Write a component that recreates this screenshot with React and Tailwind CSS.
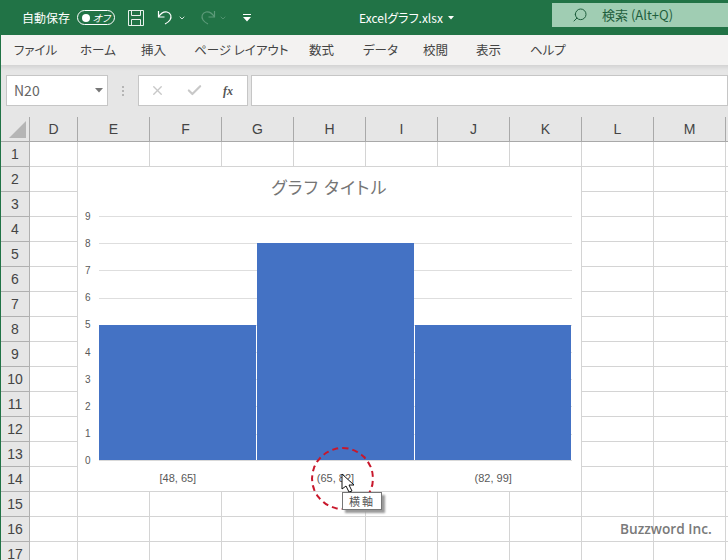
import React from "react";
import { ChevronDown, Check, X, Search } from "lucide-react";

const JP = "font-['Meiryo','Noto_Sans_CJK_JP',sans-serif] [font-feature-settings:'palt']";

const tabs = [
  { label: "ファイル", width: "w-[38px]" },
  { label: "ホーム", width: "w-[33px]" },
  { label: "挿入", width: "w-[25px]" },
  { label: "ページ レイアウト", width: "w-[87px]" },
  { label: "数式", width: "w-[26px]" },
  { label: "データ", width: "w-[32px]" },
  { label: "校閲", width: "w-[25px]" },
  { label: "表示", width: "w-[26px]" },
  { label: "ヘルプ", width: "w-[32px]" },
];
const columns = ["D", "E", "F", "G", "H", "I", "J", "K", "L", "M"];
const rows = Array.from({ length: 17 }, (_, i) => i + 1);

// ===== Title bar =====
function TitleBar() {
  return (
    <div className="h-[35px] bg-[#217346] flex items-center text-white shrink-0">
      <span className="ml-[22px] text-[12px] w-[48px] whitespace-nowrap">自動保存</span>
      <div className="ml-[7px] w-[38px] h-[15px] border border-white rounded-full flex items-center justify-between pl-[4px] pr-[4px]">
        <span className="w-[8px] h-[8px] bg-white rounded-full" />
        <span className="text-[10px] leading-none italic">オフ</span>
      </div>
      <svg className="ml-[13px]" width="16" height="16" viewBox="0 0 16 16" fill="none" stroke="#e8f1ec" strokeWidth="1">
        <path d="M.5.5h15v15H.5z" />
        <path d="M3.500.5v5h9v-5M3.500 15.500v-6h9v6" />
      </svg>
      <svg className="ml-[13px]" width="17" height="17" viewBox="0 0 17 17" fill="none" stroke="#fff" strokeWidth="1.2">
        <path d="M1.500 2v6h6" />
        <path d="M1.500 8C4 4 7 2.500 10 3c4 .8 5 5 3 8-1 1.500-3 3-5 4" />
      </svg>
      <ChevronDown className="ml-[4px]" size={8} strokeWidth={2.4} />
      <svg className="ml-[13px] text-[#5c9a79]" width="17" height="17" viewBox="0 0 17 17" fill="none" stroke="currentColor" strokeWidth="1.2">
        <path d="M15.500 2v6h-6" />
        <path d="M15.500 8C13 4 10 2.500 7 3c-4 .8-5 5-3 8 1 1.500 3 3 5 4" />
      </svg>
      <ChevronDown className="ml-[3px] text-[#5c9a79]" size={8} strokeWidth={2.4} />
      <svg className="ml-[16px]" width="8" height="8" viewBox="0 0 8 8" fill="#fff">
        <path d="M0 0h8v1H0zM0 3h8L4 7.500z" />
      </svg>
      <span className="ml-[108px] text-[12px] whitespace-nowrap w-[82px]">Excelグラフ.xlsx</span>
      <svg className="ml-[7px]" width="6" height="4" viewBox="0 0 6 4" fill="#fff">
        <path d="M0 0h6L3 3.500z" />
      </svg>
      <div className="ml-auto mb-[5px] w-[176px] h-[24px] bg-[#a0cdb3] flex items-center text-[#1f5f3e]">
        <Search className="ml-[20px] -scale-x-100" size={16} strokeWidth={1.5} />
        <span className="ml-[14px] text-[13px] whitespace-nowrap">検索 (Alt+Q)</span>
      </div>
    </div>
  );
}

// ===== Ribbon tabs =====
function RibbonTabs() {
  return (
    <div className="h-[30px] bg-[#f3f2f1] flex items-center pl-[13px] gap-[28px] text-[12.500px] text-[#444444] shrink-0">
      {tabs.map((tab) => (
        <span key={tab.label} className={`whitespace-nowrap ${tab.width}`}>{tab.label}</span>
      ))}
    </div>
  );
}

// ===== Formula bar =====
function FormulaBar() {
  return (
    <div className="h-[52px] bg-[#e6e6e6] flex items-start pt-[10px] pl-[5px] shrink-0 shadow-[inset_0_5px_4px_-3px_#cfcfcf]">
      <div className="w-[102px] h-[31px] bg-white border border-[#c6c6c6] flex items-center justify-between pl-[7px] pr-[4px] text-[14px] text-[#666666]">
        <span>N20</span>
        <svg width="8" height="5" viewBox="0 0 8 5" fill="#777777"><path d="M0 0h8L4 4.500z" /></svg>
      </div>
      <div className="w-[30px] h-[31px] flex flex-col items-center justify-center gap-[2px]">
        <span className="w-[2px] h-[2px] bg-[#b5b5b5]" />
        <span className="w-[2px] h-[2px] bg-[#b5b5b5]" />
        <span className="w-[2px] h-[2px] bg-[#b5b5b5]" />
      </div>
      <div className="w-[110px] h-[31px] bg-white border border-[#c6c6c6] flex items-center text-[#c8c8c8]">
        <X className="ml-[11px]" size={15} strokeWidth={2.2} />
        <Check className="ml-[21px]" size={17} strokeWidth={3} />
        <span className="ml-[20px] text-[12px] font-bold italic text-[#555555] font-['Liberation_Serif',serif]">fx</span>
      </div>
      <div className="ml-[3px] flex-1 h-[31px] bg-white border border-[#c6c6c6]" />
    </div>
  );
}

// ===== Chart =====
function Chart() {
  return (
    <div className="absolute left-[77px] top-[50px] w-[503px] h-[324px] bg-white flex flex-col font-['Liberation_Sans',sans-serif]">
      <div className={`h-[49px] pt-[6px] text-center text-[17px] leading-[28px] tracking-[1.2px] text-[#757575] ${JP}`}>
        グラフ タイトル
      </div>
      <div className="flex h-[245px] items-start">
        <div className="w-[21px] h-[255px] -mt-[5px] flex flex-col-reverse justify-between text-[10px] text-[#595959] pl-[7px]">
          {[0, 1, 2, 3, 4, 5, 6, 7, 8, 9].map((n) => (
            <span key={n} className="h-[11px] leading-[11px]">{n}</span>
          ))}
        </div>
        <svg width="473" height="245" viewBox="0 0 473 245" shapeRendering="crispEdges">
          {[0, 1, 2, 3, 4, 5, 6, 7, 8].map((n) => (
            <rect key={n} x="0" y={Math.round(n * 27.2)} width="473" height="1" fill="#dedede" />
          ))}
          <rect x="0" y="109" width="157" height="135" fill="#4472c4" />
          <rect x="158" y="27" width="157" height="217" fill="#4472c4" />
          <rect x="316" y="109" width="156" height="135" fill="#4472c4" />
          <rect x="0" y="244" width="473" height="1" fill="#d9d9d9" />
        </svg>
      </div>
      <div className="flex ml-[21px] w-[473px] mt-[9px] text-[11px] text-[#595959] text-center">
        <span className="flex-1">[48, 65]</span>
        <span className="flex-1">(65, 82]</span>
        <span className="flex-1">(82, 99]</span>
      </div>
    </div>
  );
}

// ===== Sheet grid =====
function Sheet() {
  return (
    <div className="relative flex-1 overflow-hidden bg-white">
      <div className="grid grid-cols-[29px_48px_repeat(10,72px)] auto-rows-[25px] text-[#444444]">
        {/* header row */}
        <div className="h-[25px] bg-[#e6e6e6] border-r border-b border-[#a9a9a9] flex items-end justify-end pr-[3px] pb-[3px]">
          <svg width="17" height="17" viewBox="0 0 17 17" fill="#b5b5b5"><path d="M17 0v17H0z" /></svg>
        </div>
        {columns.map((c) => (
          <div key={c} className="bg-[#e6e6e6] border-r border-b border-[#a9a9a9] flex items-center justify-center text-[14px] font-['Liberation_Sans',sans-serif]">
            {c}
          </div>
        ))}
        <div className="bg-[#e6e6e6] border-b border-[#a9a9a9]" />
        {rows.map((r) => (
          <React.Fragment key={r}>
            <div className="bg-[#e6e6e6] border-r border-b border-[#b0b0b0] flex items-center justify-center text-[14px] font-['Liberation_Sans',sans-serif]">
              {r}
            </div>
            {columns.map((c) => (
              <div key={c} className="border-r border-b border-[#d4d4d4]" />
            ))}
            <div className="border-b border-[#d4d4d4]" />
          </React.Fragment>
        ))}
      </div>

      <Chart />

      {/* callout and tooltip over the chart */}
      <div className="absolute left-[310px] top-[330px] w-[63px] h-[63px] rounded-full border-2 border-dashed border-[#c8172b]" />
      <svg className="absolute left-[340px] top-[356px]" width="14" height="20" viewBox="0 0 14 20" fill="#fff" stroke="#111" strokeWidth="1">
        <path d="M1 1v15l4-3 3 6 3-1-3-6h5z" />
      </svg>
      <div className={`absolute left-[341px] top-[375px] w-[40px] h-[18px] bg-white border border-[#767676] shadow-[3px_3px_2px_#9a9a9a] flex items-center justify-center text-[11px] tracking-[2px] text-[#555555] ${JP}`}>
        横軸
      </div>

      <span className="absolute left-[619px] top-[402px] text-[13.700px] font-semibold text-[#7a7a7a] font-['Open_Sans',sans-serif] whitespace-nowrap">
        Buzzword Inc.
      </span>
    </div>
  );
}

export default function App() {
  return (
    <div className={`w-[728px] h-[560px] overflow-hidden flex flex-col bg-white ${JP}`}>
      <TitleBar />
      <div className="flex-1 flex flex-col border-l border-[#217346] min-h-0">
        <RibbonTabs />
        <FormulaBar />
        <Sheet />
      </div>
    </div>
  );
}
